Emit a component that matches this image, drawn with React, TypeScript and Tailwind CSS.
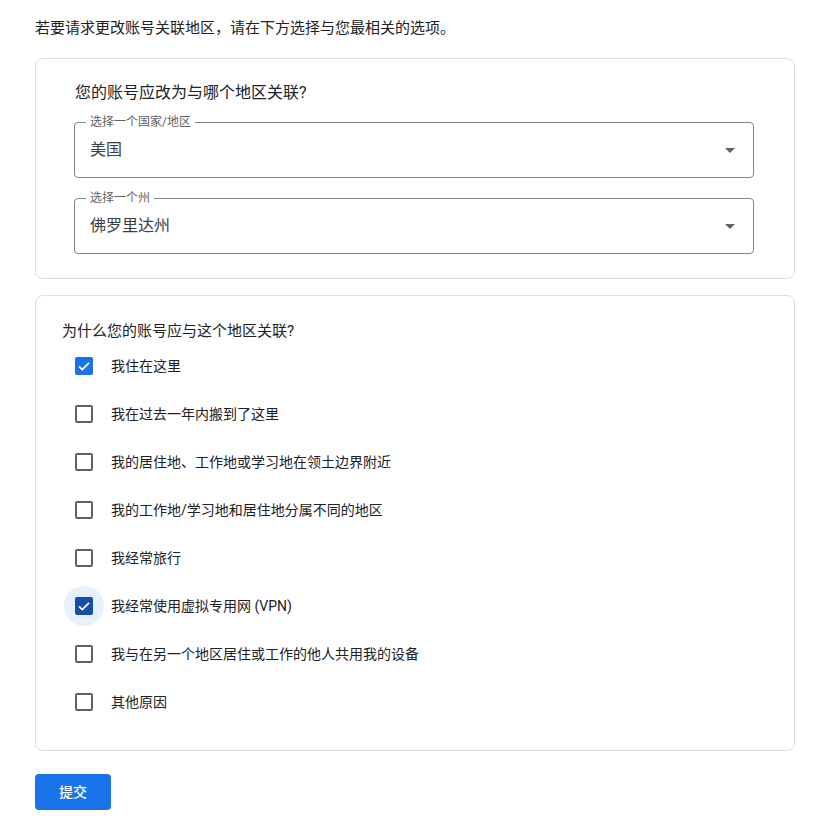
import React from 'react';

const reasons = [
  { label: '我住在这里', checked: true },
  { label: '我在过去一年内搬到了这里', checked: false },
  { label: '我的居住地、工作地或学习地在领土边界附近', checked: false },
  { label: '我的工作地/学习地和居住地分属不同的地区', checked: false },
  { label: '我经常旅行', checked: false },
  { label: '我经常使用虚拟专用网 (VPN)', checked: true, focused: true },
  { label: '我与在另一个地区居住或工作的他人共用我的设备', checked: false },
  { label: '其他原因', checked: false },
];

function SelectField({ label, value }: { label: string; value: string }) {
  return (
    <div className="relative flex h-14 items-center rounded border border-[#80868b] pl-[15px] pr-[18px]">
      <span className="absolute -top-[9px] left-[11px] bg-white px-1 text-xs leading-4 text-[#5f6368]">
        {label}
      </span>
      <span className="flex-1 text-base text-[#3c4043]">{value}</span>
      <svg width="10" height="5" viewBox="0 0 10 5">
        <path d="M0 0h10L5 5z" fill="#5f6368" />
      </svg>
    </div>
  );
}

function Checkbox({ checked, focused }: { checked: boolean; focused?: boolean }) {
  const box = checked
    ? focused
      ? 'bg-[#174ea6] border-[#174ea6]'
      : 'bg-[#1a73e8] border-[#1a73e8]'
    : 'bg-white border-[#5f6368]';
  return (
    <div
      className={`flex h-10 w-10 items-center justify-center rounded-full ${
        focused ? 'bg-[#e8f0fe]' : ''
      }`}
    >
      <div className={`flex h-[18px] w-[18px] items-center justify-center rounded-[2px] border-2 ${box}`}>
        {checked && (
          <svg width="16" height="16" viewBox="0 0 24 24">
            <path
              d="M3.5 12.5l5.5 5.5L20.5 6.5"
              fill="none"
              stroke="white"
              strokeWidth="3"
            />
          </svg>
        )}
      </div>
    </div>
  );
}

export default function App() {
  return (
    <div
      className="min-h-screen bg-white pl-[35px] pt-4 text-[#202124]"
      style={{ fontFamily: 'Roboto, "Noto Sans CJK SC", sans-serif' }}
    >
      <p className="mb-[18px] text-[15px] leading-6">
        若要请求更改账号关联地区，请在下方选择与您最相关的选项。
      </p>

      <div className="w-[760px] rounded-lg border border-[#dadce0] pb-6 pl-[38px] pr-10 pt-[22px]">
        <p className="ml-px text-base leading-6">您的账号应改为与哪个地区关联?</p>
        <div className="mt-[17px] space-y-5">
          <SelectField label="选择一个国家/地区" value="美国" />
          <SelectField label="选择一个州" value="佛罗里达州" />
        </div>
      </div>

      <div className="mt-4 w-[760px] rounded-lg border border-[#dadce0] pb-6 pl-[26px] pt-[23px]">
        <p className="text-[15px] leading-6">为什么您的账号应与这个地区关联?</p>
        <div className="-mt-px">
          {reasons.map((r) => (
            <div key={r.label} className="flex h-12 items-center pl-[2px]">
              <Checkbox checked={r.checked} focused={r.focused} />
              <span className="ml-[7px] text-sm">{r.label}</span>
            </div>
          ))}
        </div>
      </div>

      <button className="mt-[23px] h-9 w-[76px] rounded bg-[#1a73e8] text-sm font-medium text-white">
        提交
      </button>
    </div>
  );
}
